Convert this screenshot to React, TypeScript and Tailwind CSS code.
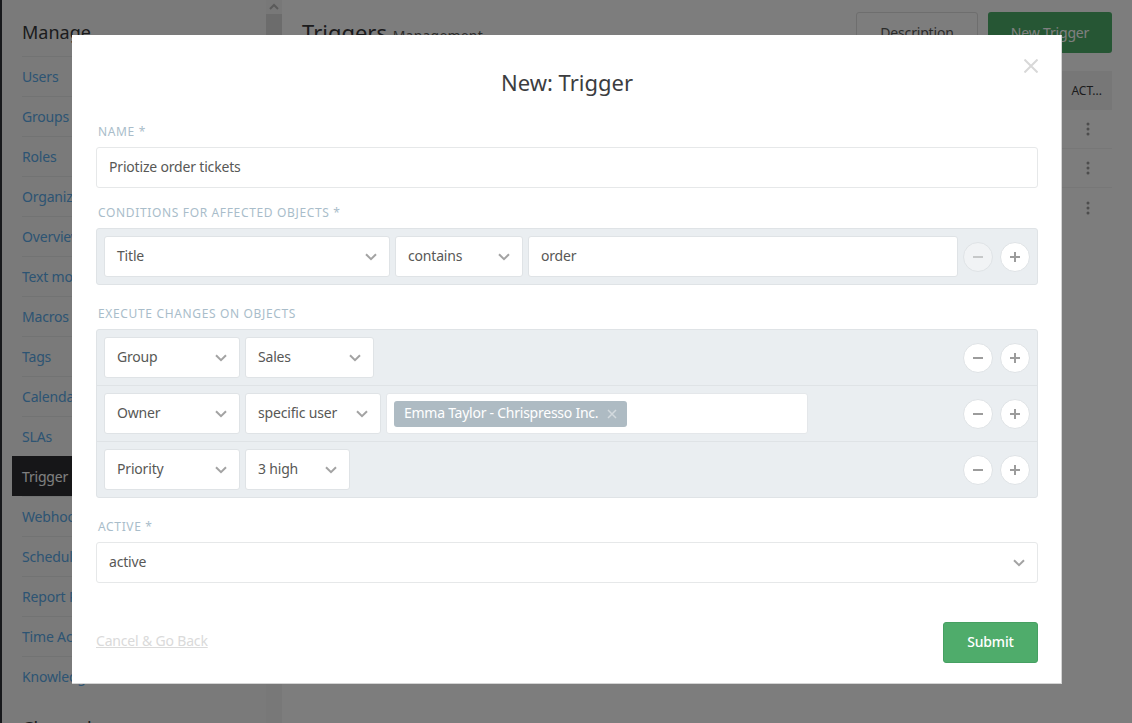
const font = { fontFamily: '"Noto Sans", sans-serif' };

const navItems = ["Users", "Groups", "Roles", "Organizations", "Overviews", "Text modules", "Macros", "Tags", "Calendars", "SLAs", "Trigger", "Webhook", "Scheduler", "Report Profiles", "Time Accounting", "Knowledge Base"];

function Chevron() {
  return (
    <svg width="12" height="8" viewBox="0 0 12 8" fill="none" className="shrink-0">
      <path d="M1 1.2 L6 6.2 L11 1.2" stroke="#a3a3a3" strokeWidth="2" />
    </svg>
  );
}

function Select({ label, w, bare }: { label: string; w: string; bare?: boolean }) {
  return (
    <div className={`${w} h-[41px] shrink-0 flex items-center justify-between bg-white border rounded-[3px] pl-3 pr-3 text-[14px] tracking-[-0.18px] text-[#585856] ${bare ? "border-[#e6e8e9]" : "border-[#dfe3e6]"}`}>
      <span className="mb-[2px]">{label}</span>
      <Chevron />
    </div>
  );
}

function RoundBtn({ kind, faded }: { kind: "plus" | "minus"; faded?: boolean }) {
  return (
    <div className={`w-[30px] h-[30px] rounded-full border border-[#dfe3e6] flex items-center justify-center ${faded ? "bg-[#f1f3f5]" : "bg-white"}`}>
      <svg width="12" height="12" viewBox="0 0 12 12">
        <rect x="1" y="5" width="10" height="2" fill={faded ? "#c6c8c9" : "#9c9c9c"} />
        {kind === "plus" && <rect x="5" y="1" width="2" height="10" fill="#9c9c9c" />}
      </svg>
    </div>
  );
}

function Label({ children }: { children: string }) {
  return <div className="h-[16px] leading-[18px] pl-[2px] text-[12px] uppercase tracking-[0.65px] text-[#a9bdca]">{children}</div>;
}

function Row({ children, last }: { children: React.ReactNode; last?: boolean }) {
  return (
    <div className={`flex items-center gap-[5px] pl-[7px] pr-[7px] ${last ? "h-[55px]" : "h-[56px] border-b border-[#dfe3e6]"}`}>
      {children}
      <div className="ml-auto flex gap-[7px] pl-[5px]">
        <RoundBtn kind="minus" />
        <RoundBtn kind="plus" />
      </div>
    </div>
  );
}

export default function App() {
  return (
    <div style={font} className="relative w-[1132px] h-[723px] overflow-hidden flex bg-[#fafafa]">
      {/* page behind */}
      <div className="w-[2px] shrink-0 bg-[#2f3036]" />
      <aside className="w-[264px] shrink-0 h-full overflow-hidden pl-[10px] bg-[#f4f5f5]">
        <h2 className="pt-[17px] pl-[10px] h-[56px] text-[18px] leading-[30px] text-[#38393b]">Manage</h2>
        <ul>
          {navItems.map((n) => (
            <li key={n} className={`h-[40px] flex items-center pl-[10px] text-[14px] tracking-[-0.18px] ${n === "Trigger" ? "bg-[#2c2d31] text-white" : "text-[#5aa8e6]"}`}>
              <span className={n === "Trigger" ? "" : "border-t border-[#e4e6e7] w-full h-[40px] leading-[39px]"}>{n}</span>
            </li>
          ))}
        </ul>
        <h2 className="pt-[17px] pl-[10px] text-[18px] leading-[30px] text-[#38393b]">Channels</h2>
      </aside>
      <div className="w-[16px] shrink-0 h-full bg-[#f0f0f0] flex flex-col items-center">
        <svg width="10" height="14" viewBox="0 0 10 14" className="shrink-0"><path d="M1 9 L5 5 L9 9" stroke="#b5b5b5" strokeWidth="2" fill="none" /></svg>
        <div className="w-full h-[300px] bg-[#d8d8d8]" />
      </div>
      <main className="flex-1 min-w-0 pl-[20px] pr-[20px] pt-[12px]">
        <div className="flex items-start h-[59px]">
          <h1 className="text-[22px] leading-[40px] text-[#38393b]">Triggers <span className="text-[14px] tracking-[0.2px] text-[#585856]">Management</span></h1>
          <div className="ml-auto flex gap-[10px] text-[14px] tracking-[-0.18px]">
            <div className="w-[122px] h-[41px] rounded-[3px] border border-[#dcdcdc] flex items-center justify-center text-[#585856]">Description</div>
            <div className="w-[124px] h-[41px] rounded-[3px] bg-[#4cac69] flex items-center justify-center text-white">New Trigger</div>
          </div>
        </div>
        <div className="h-[39px] bg-[#eeeeee] flex items-center justify-end pr-[10px] text-[12px] text-[#38393b]">ACT...</div>
        {[0, 1, 2].map((i) => (
          <div key={i} className={`h-[39px] flex items-center justify-end pr-[22px] ${i < 2 ? "border-b border-[#eeeeee]" : ""}`}>
            <svg width="4" height="14" viewBox="0 0 4 14" fill="#9a9a9a"><circle cx="2" cy="2" r="1.5" /><circle cx="2" cy="7" r="1.5" /><circle cx="2" cy="12" r="1.5" /></svg>
          </div>
        ))}
      </main>

      {/* backdrop */}
      <div className="absolute inset-0 bg-[#000000]/50" />

      {/* modal */}
      <div className="absolute left-[72px] top-[35px] w-[990px] h-[649px] bg-white border-r border-b border-[#d4d4d4] pl-[24px] pr-[23px] text-[14px] tracking-[-0.18px] text-[#585856]">
        <svg className="absolute right-[23px] top-[24px]" width="14" height="14" viewBox="0 0 14 14">
          <path d="M0.5 0.5 L13.5 13.5 M13.5 0.5 L0.5 13.5" stroke="#d8d8d8" strokeWidth="2" />
        </svg>
        <h1 className="h-[88px] pt-[29px] text-center text-[22px] leading-[36px] tracking-normal text-[#3c3d3f]">New: Trigger</h1>

        <Label>Name *</Label>
        <div className="mt-[8px] h-[41px] flex items-center border border-[#e6e8e9] rounded-[3px] pl-3"><span className="mb-[2px]">Priotize order tickets</span></div>

        <div className="mt-[16px]"><Label>Conditions for affected objects *</Label></div>
        <div className="mt-[8px] h-[57px] bg-[#eaeef1] border border-[#dfe3e6] rounded-[3px] flex items-center gap-[5px] px-[7px]">
          <Select label="Title" w="w-[286px]" />
          <Select label="contains" w="w-[128px]" />
          <div className="w-[430px] h-[41px] shrink-0 flex items-center bg-white border border-[#dfe3e6] rounded-[3px] pl-3"><span className="mb-[2px]">order</span></div>
          <div className="ml-auto flex gap-[7px]">
            <RoundBtn kind="minus" faded />
            <RoundBtn kind="plus" />
          </div>
        </div>

        <div className="mt-[20px]"><Label>Execute changes on objects</Label></div>
        <div className="mt-[8px] bg-[#eaeef1] border border-[#dfe3e6] rounded-[3px]">
          <Row>
            <Select label="Group" w="w-[136px]" />
            <Select label="Sales" w="w-[129px]" />
          </Row>
          <Row>
            <Select label="Owner" w="w-[136px]" />
            <Select label="specific user" w="w-[136px]" />
            <div className="w-[422px] h-[41px] shrink-0 flex items-center bg-white border border-[#e4e7ea] rounded-[3px] pl-[7px]">
              <div className="h-[26px] w-[233px] flex items-center justify-between rounded-[3px] bg-[#aebbc3] pl-[10px] pr-[10px] text-white tracking-[-0.25px]">
                <span className="mb-[2px]">Emma Taylor - Chrispresso Inc.</span>
                <svg width="10" height="10" viewBox="0 0 10 10"><path d="M1 1 L9 9 M9 1 L1 9" stroke="#d3dade" strokeWidth="1.5" /></svg>
              </div>
            </div>
          </Row>
          <Row last>
            <Select label="Priority" w="w-[136px]" />
            <Select label="3 high" w="w-[105px]" />
          </Row>
        </div>

        <div className="mt-[20px]"><Label>Active *</Label></div>
        <div className="mt-[8px]"><Select label="active" w="w-full" bare /></div>

        <div className="mt-[39px] flex items-center justify-between">
          <a className="mb-[4px] underline text-[#dadada]">Cancel &amp; Go Back</a>
          <div className="w-[95px] h-[41px] flex items-center justify-center rounded-[3px] bg-[#4fac6b] border border-[#46a062] text-white font-medium"><span className="mb-[2px]">Submit</span></div>
        </div>
      </div>
    </div>
  );
}
